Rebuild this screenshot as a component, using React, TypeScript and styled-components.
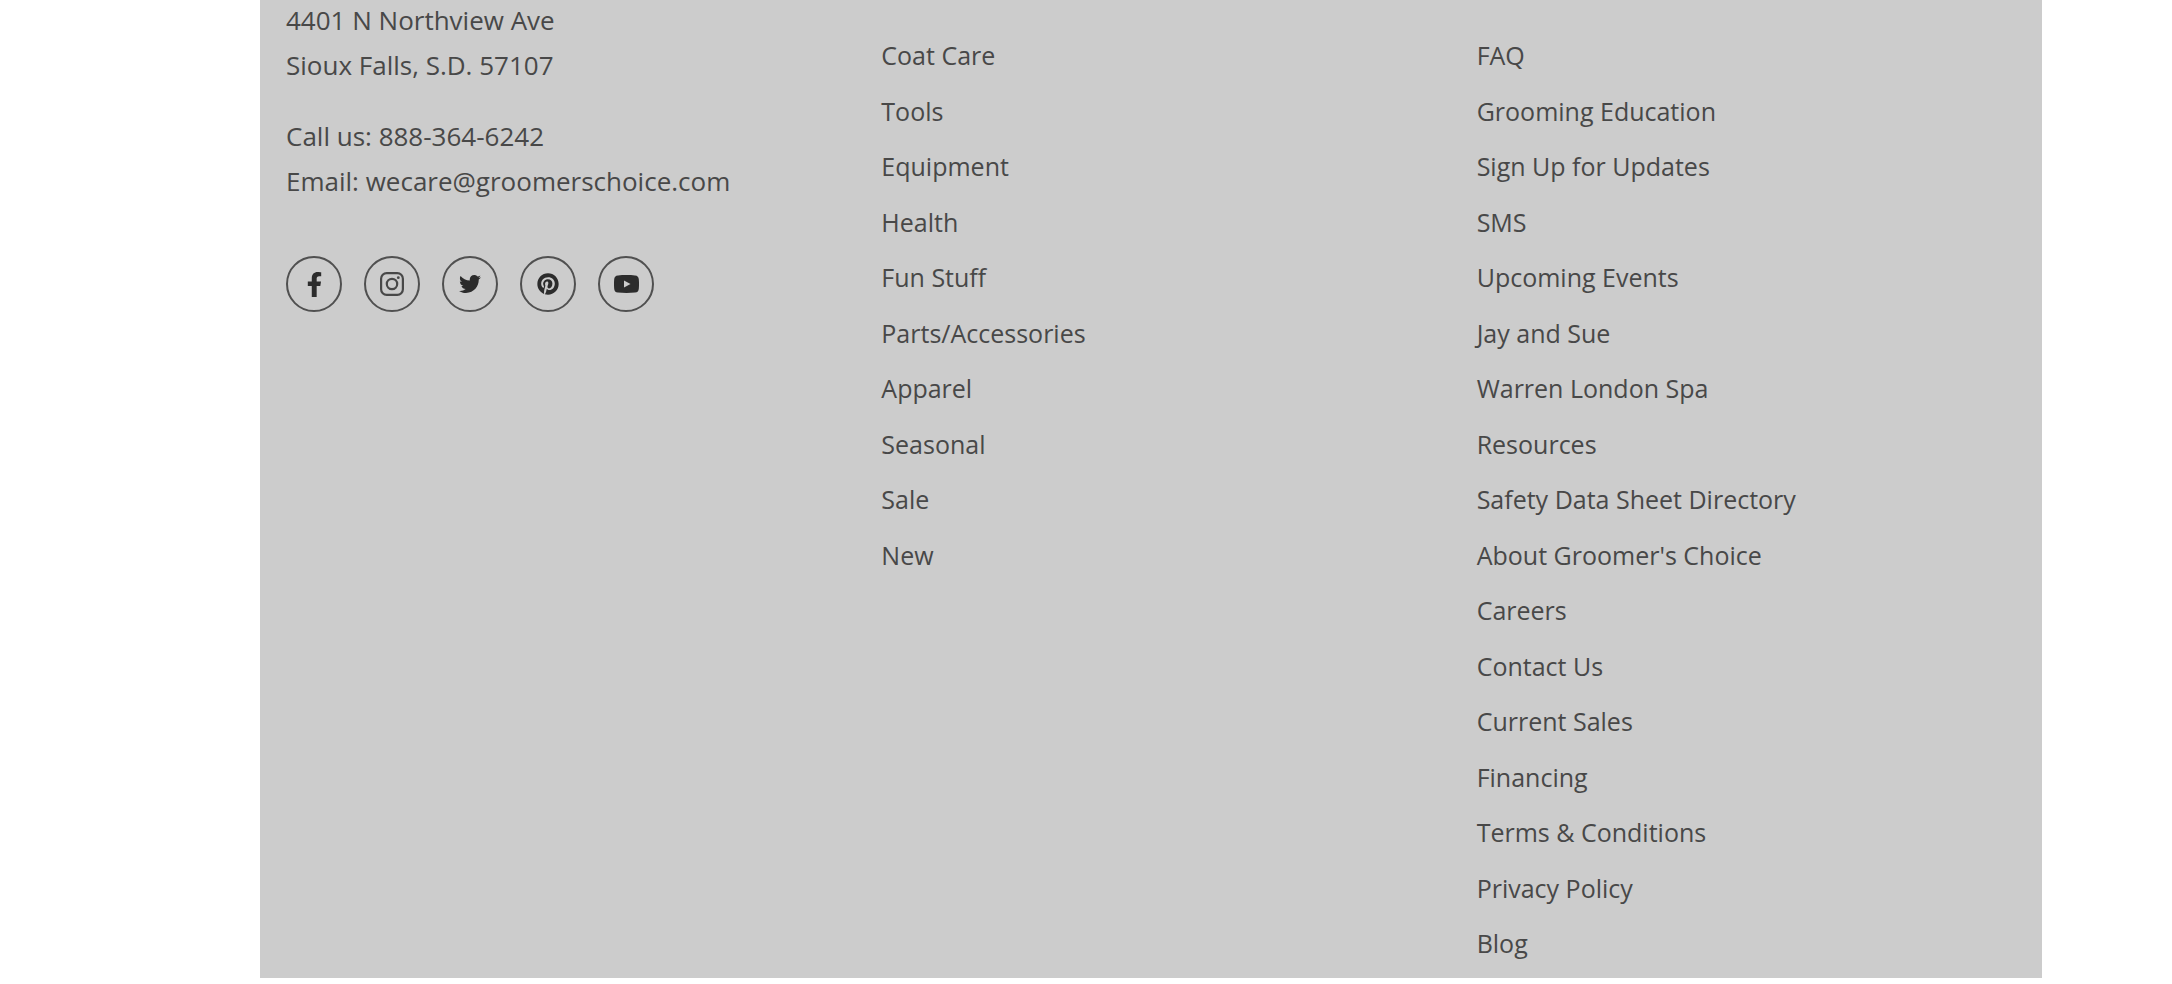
import React from "react";
import styled, { createGlobalStyle } from "styled-components";
import { FaFacebookF, FaPinterest, FaTwitter } from "react-icons/fa";

const GlobalStyle = createGlobalStyle`
  *, *::before, *::after { box-sizing: border-box; }
  body {
    margin: 0;
    background: #fff;
    color: #484848;
    font-family: "Open Sans", "Noto Sans", sans-serif;
    font-size: 25px;
    line-height: 1.5;
  }
`;

const Footer = styled.footer`
  display: grid;
  grid-template-columns: repeat(3, minmax(0, 1fr));
  column-gap: 56px;
  margin: 0 130px 0 260px;
  padding: 0 26px 6px;
  background: #ccc;
`;

const Contact = styled.address`
  margin-top: -2px;
  font-size: 26px;
  font-style: normal;
  line-height: 45px;
`;

const Paragraph = styled.p`
  margin: 0 0 26px;
`;

const TextLink = styled.a`
  color: inherit;
  text-decoration: none;

  &:hover {
    text-decoration: underline;
  }
`;

const SocialList = styled.ul`
  display: flex;
  flex-wrap: wrap;
  gap: 22px;
  margin: 52px 0 0;
  padding: 0;
  list-style: none;
`;

const SocialLink = styled.a`
  display: flex;
  align-items: center;
  justify-content: center;
  width: 56px;
  height: 56px;
  border: 2px solid #505050;
  border-radius: 50%;
  color: #2c2c2c;
`;

const LinkList = styled.ul`
  margin: 28px 0 0;
  padding: 0;
  list-style: none;
`;

const LinkItem = styled.li`
  padding: 9px 0;
`;

const InstagramIcon = () => (
  <svg width="24" height="24" viewBox="0 0 24 24" fill="none" stroke="#484848" strokeWidth="2.2" aria-hidden="true">
    <rect x="1.1" y="1.1" width="21.8" height="21.8" rx="5.6" />
    <circle cx="12" cy="12" r="5.2" />
    <circle cx="18.3" cy="5.7" r="1.4" fill="#484848" stroke="none" />
  </svg>
);

const YouTubeIcon = () => (
  <svg width="25" height="18" viewBox="0 0 25 18" fill="currentColor" aria-hidden="true">
    <path
      fillRule="evenodd"
      d="M4 .4C9 0 16 0 21 .4 23.600 .6 24.600 2 24.800 4.200 25.100 7.500 25.100 10.500 24.800 13.800 24.600 16 23.600 17.400 21 17.600 16 18 9 18 4 17.600 1.400 17.400 .4 16 .2 13.800 -.1 10.500 -.1 7.500 .2 4.200 .4 2 1.400 .6 4 .4ZM10 5.400V12.400L16.500 8.900Z"
    />
  </svg>
);

const socials = [
  { name: "Facebook", icon: <FaFacebookF size={25} aria-hidden /> },
  { name: "Instagram", icon: <InstagramIcon /> },
  { name: "Twitter", icon: <FaTwitter size={22} aria-hidden /> },
  { name: "Pinterest", icon: <FaPinterest size={22} aria-hidden /> },
  { name: "YouTube", icon: <YouTubeIcon /> },
];

const shopLinks = [
  "Coat Care",
  "Tools",
  "Equipment",
  "Health",
  "Fun Stuff",
  "Parts/Accessories",
  "Apparel",
  "Seasonal",
  "Sale",
  "New",
];

const infoLinks = [
  "FAQ",
  "Grooming Education",
  "Sign Up for Updates",
  "SMS",
  "Upcoming Events",
  "Jay and Sue",
  "Warren London Spa",
  "Resources",
  "Safety Data Sheet Directory",
  "About Groomer's Choice",
  "Careers",
  "Contact Us",
  "Current Sales",
  "Financing",
  "Terms & Conditions",
  "Privacy Policy",
  "Blog",
];

const LinkColumn = ({ label, links }: { label: string; links: string[] }) => (
  <nav aria-label={label}>
    <LinkList>
      {links.map((link) => (
        <LinkItem key={link}>
          <TextLink href="#">{link}</TextLink>
        </LinkItem>
      ))}
    </LinkList>
  </nav>
);

export default function App() {
  return (
    <>
      <GlobalStyle />
      <Footer>
        <div>
          <Contact>
            <Paragraph>
              4401 N Northview Ave
              <br />
              Sioux Falls, S.D. 57107
            </Paragraph>
            <Paragraph>
              Call us: <TextLink href="tel:888-364-6242">888-364-6242</TextLink>
              <br />
              Email: <TextLink href="mailto:wecare@groomerschoice.com">wecare@groomerschoice.com</TextLink>
            </Paragraph>
          </Contact>
          <SocialList>
            {socials.map(({ name, icon }) => (
              <li key={name}>
                <SocialLink href="#" aria-label={name}>
                  {icon}
                </SocialLink>
              </li>
            ))}
          </SocialList>
        </div>
        <LinkColumn label="Shop" links={shopLinks} />
        <LinkColumn label="Information" links={infoLinks} />
      </Footer>
    </>
  );
}
